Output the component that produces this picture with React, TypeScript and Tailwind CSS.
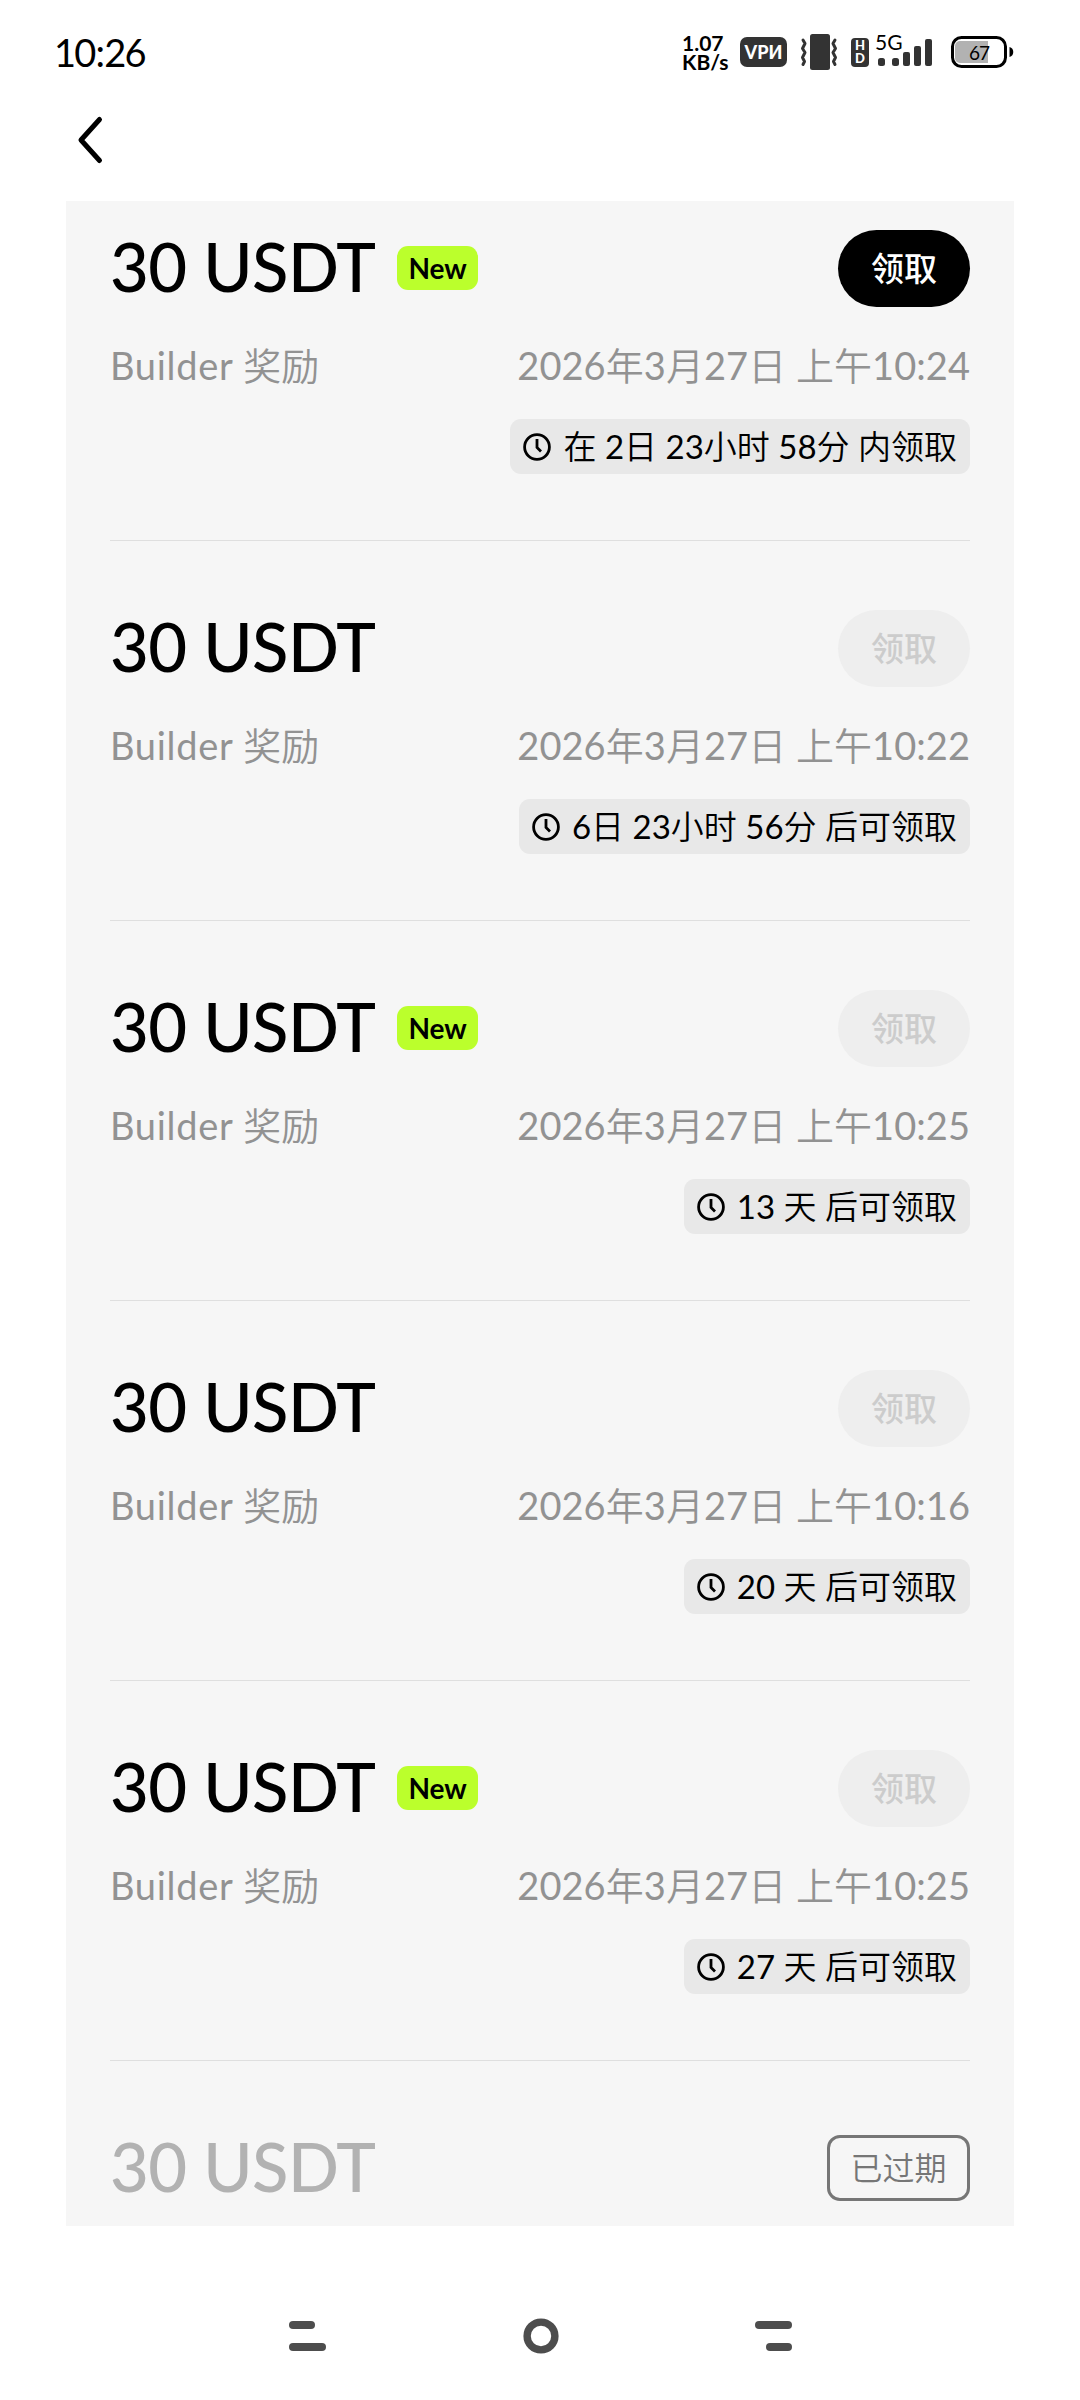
import clsx from "clsx";

type Reward = {
  time: string;
  isNew?: boolean;
  claimable?: boolean;
  countdown: string;
};

const rewards: Reward[] = [
  { time: "10:24", isNew: true, claimable: true, countdown: "在 2日 23小时 58分 内领取" },
  { time: "10:22", countdown: "6日 23小时 56分 后可领取" },
  { time: "10:25", isNew: true, countdown: "13 天 后可领取" },
  { time: "10:16", countdown: "20 天 后可领取" },
  { time: "10:25", isNew: true, countdown: "27 天 后可领取" },
];

// Han characters are set a touch lighter than the digits around them
function Mixed({ text }: { text: string }) {
  return (
    <>
      {text.split(/([\u4e00-\u9fff]+)/).map((part, i) =>
        i % 2 === 1 ? (
          <span key={i} className="font-[350]">
            {part}
          </span>
        ) : (
          part
        ),
      )}
    </>
  );
}

function StatusBar() {
  return (
    <div className="flex h-[104px] items-center pl-[54px] pr-[66px] text-black">
      <span className="text-[38px] leading-none tracking-[-1.8px]">
        10<span className="mx-[1px]">:</span>26
      </span>
      <div className="ml-auto flex items-center">
        <span className="w-[58px] text-[21px] font-bold leading-[19px]">
          1.07
          <br />
          KB/s
        </span>
        <div className="flex h-[30px] w-[47px] items-center justify-center rounded-[7px] bg-[#333] text-[18px] font-black leading-none text-white">
          VPИ
        </div>
        <svg className="ml-[12px]" width="42" height="38" viewBox="0 0 42 38" fill="none">
          <rect x="11" y="1" width="20" height="36" rx="2.5" fill="#333" />
          <path
            d="M4 7l2 3.5-2.5 5 2.5 4-2.5 5 2 4-1.5 3M36 7l-2 3.5 2.5 5-2.5 4 2.5 5-2 4 1.5 3"
            stroke="#333"
            strokeWidth="3"
            strokeLinecap="round"
            strokeLinejoin="round"
          />
        </svg>
        <div className="ml-[10px] flex h-[29px] w-[18px] flex-col items-center justify-center rounded-[4px] bg-[#333] text-[13px] font-black leading-[13px] text-white">
          <span>H</span>
          <span>D</span>
        </div>
        <div className="relative ml-[9px] h-[38px] w-[54px]">
          <span className="absolute -left-[3px] -top-[2px] text-[21px] leading-none">5G</span>
          <svg width="54" height="38" viewBox="0 0 54 38" fill="#333">
            <rect x="0" y="25" width="7" height="8" rx="2.5" />
            <rect x="14" y="25" width="7" height="8" rx="2.5" />
            <rect x="25" y="19" width="7" height="14" rx="2" />
            <rect x="36" y="13" width="7" height="20" rx="2" />
            <rect x="47" y="6" width="7" height="27" rx="2" />
          </svg>
        </div>
        <div className="relative ml-[19px] flex h-[32px] w-[63px] items-center">
          <svg width="63" height="32" viewBox="0 0 63 32" fill="none">
            <path d="M9 5h28v22H9a5 5 0 0 1-5-5V10a5 5 0 0 1 5-5z" fill="#b2b2b2" />
            <rect x="1.5" y="1.5" width="53" height="29" rx="9" stroke="#000" strokeWidth="3" />
            <path d="M58.5 11c5 1 5 9 0 10z" fill="#000" />
          </svg>
          <span className="absolute left-[18px] text-[19px] leading-none tracking-[-1px]">67</span>
        </div>
      </div>
    </div>
  );
}

function ClockIcon() {
  return (
    <svg width="28" height="28" viewBox="0 0 28 28" fill="none" stroke="#000" strokeWidth="2.8">
      <circle cx="14" cy="14" r="12.4" />
      <path d="M14 6v8.5l4 4" />
    </svg>
  );
}

function Amount({ expired }: { expired?: boolean }) {
  return (
    <span
      className={clsx(
        "pb-[4px] text-[67px] font-medium leading-none tracking-[-0.5px]",
        expired ? "text-[#b2b2b2]" : "text-black",
      )}
    >
      30 USDT
    </span>
  );
}

function RewardRow({ reward }: { reward: Reward }) {
  return (
    <div className="h-[380px] border-b border-[#dfdfdf] pt-[69px]">
      <div className="flex h-[77px] items-center">
        <Amount />
        {reward.isNew && (
          <span className="mb-[1px] ml-[21px] flex h-[44px] w-[81px] items-center justify-center rounded-[11px] bg-[#bbff2c] pl-px text-[28px] font-bold leading-none">
            New
          </span>
        )}
        <button
          className={clsx(
            "ml-auto h-[77px] w-[132px] rounded-full text-[33px] font-medium leading-none",
            reward.claimable ? "bg-black text-white" : "bg-[#eee] text-[#ccc]",
          )}
        >
          领取
        </button>
      </div>
      <div className="mt-[29px] flex h-[58px] items-center justify-between text-[38px] leading-none text-[#929292]">
        <span>
          <span className="tracking-[0.7px]">Builder</span> <Mixed text="奖励" />
        </span>
        <span className="tracking-[0.05px]">
          <Mixed text={`2026年3月27日 上午${reward.time}`} />
        </span>
      </div>
      <div className="mt-[25px] flex justify-end">
        <div className="flex h-[55px] items-center gap-[12px] rounded-[11px] bg-[#e8e8e8] px-[13px] text-[33px] leading-none">
          <ClockIcon />
          <span className="whitespace-nowrap pb-[1px]">
            <Mixed text={reward.countdown} />
          </span>
        </div>
      </div>
    </div>
  );
}

export default function App() {
  return (
    <div className="flex h-[2400px] w-[1080px] flex-col bg-white font-['Lato','Noto_Sans_CJK_SC',sans-serif] text-black">
      <StatusBar />
      <div className="flex h-[97px] items-start pl-[76px] pt-[11px]">
        <svg width="28" height="50" viewBox="0 0 28 50" fill="none">
          <path d="M23.5 4.5L5 25 23.5 45.5" stroke="#000" strokeWidth="5" strokeLinecap="round" strokeLinejoin="round" />
        </svg>
      </div>

      <div className="mx-[66px] h-[2025px] overflow-hidden bg-[#f6f6f6] px-[44px]">
        <div className="-mt-[40px]">
          {rewards.map((reward, i) => (
            <RewardRow key={i} reward={reward} />
          ))}
          <div className="flex h-[146px] items-center pt-[69px]">
            <Amount expired />
            <span className="mb-[2px] ml-auto flex h-[66px] w-[143px] items-center justify-center rounded-[13px] border-[3px] border-[#767676] text-[32px] font-[350] leading-none text-[#767676]">
              已过期
            </span>
          </div>
        </div>
      </div>

      <div className="flex flex-1 items-center justify-between pl-[289px] pr-[288px] pt-[45px]">
        <div className="flex w-[37px] flex-col items-start gap-[14px]">
          <span className="h-[8px] w-[26px] rounded-full bg-[#4d4d4d]" />
          <span className="h-[8px] w-[37px] rounded-full bg-[#4d4d4d]" />
        </div>
        <svg width="36" height="36" viewBox="0 0 36 36" fill="none">
          <circle cx="18" cy="18" r="13.9" stroke="#4d4d4d" strokeWidth="7.4" />
        </svg>
        <div className="flex w-[37px] flex-col items-end gap-[14px]">
          <span className="h-[8px] w-[37px] rounded-full bg-[#4d4d4d]" />
          <span className="h-[8px] w-[26px] rounded-full bg-[#4d4d4d]" />
        </div>
      </div>
    </div>
  );
}
